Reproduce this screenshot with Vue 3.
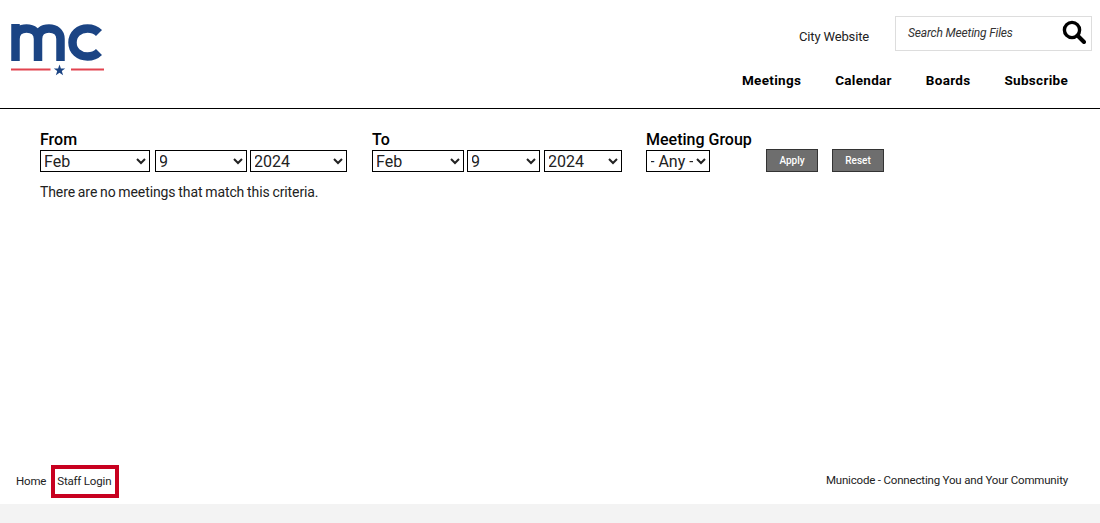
<script setup>
const months = ['Feb']
const filters = [
  { label: 'From', cls: 'from', widths: ['w110', 'w92', 'w97'] },
  { label: 'To', cls: 'to', widths: ['w92b', 'w73', 'w78'] }
]
</script>

<template>
  <div class="page">
    <header class="header">
      <a class="logo" href="#" aria-label="mc">
        <svg width="94" height="64" viewBox="0 0 94 64">
          <g fill="none" stroke="#1b4484" stroke-width="8.5">
            <path d="M4.500 45V8M4.500 23C4.500 15 10 12.500 15.500 12.500C22 12.500 27 16 27 23V45M27 23C27 15 32 12.500 38 12.500C44.500 12.500 49.500 16 49.500 23V45" />
            <path d="M88 17C85 14 81 12.500 76.500 12.500C68 12.500 61.500 18 61.500 26.500C61.500 35 68 40.500 76.500 40.500C81 40.500 85 39 88 36" />
          </g>
          <path d="M0 53.500H39.500M60 53.500H93" stroke="#e2434f" stroke-width="2" />
          <path d="M48.500 48.500l1.400 4h4.300l-3.400 2.600 1.300 4.100-3.600-2.500-3.600 2.500 1.300-4.100-3.400-2.600h4.300z" fill="#1b4484" />
        </svg>
      </a>
      <div class="header-right">
        <div class="top-row">
          <a class="city" href="#">City Website</a>
          <div class="search">
            <span class="placeholder">Search Meeting Files</span>
            <svg class="search-icon" width="24" height="24" viewBox="0 0 24 24">
              <circle cx="10" cy="10" r="7.600" fill="none" stroke="#000" stroke-width="3.400" />
              <path d="M15.500 15.500L22 22" stroke="#000" stroke-width="4" stroke-linecap="round" />
            </svg>
          </div>
        </div>
        <nav class="nav">
          <a href="#">Meetings</a>
          <a href="#">Calendar</a>
          <a href="#">Boards</a>
          <a href="#">Subscribe</a>
        </nav>
      </div>
    </header>

    <main class="main">
      <form class="filters" @submit.prevent>
        <div v-for="f in filters" :key="f.label" class="group" :class="f.cls">
          <label>{{ f.label }}</label>
          <div class="selects">
            <select :class="f.widths[0]"><option v-for="m in months" :key="m">{{ m }}</option></select>
            <select :class="f.widths[1]"><option>9</option></select>
            <select :class="f.widths[2]"><option>2024</option></select>
          </div>
        </div>
        <div class="group mg">
          <label>Meeting Group</label>
          <div class="selects">
            <select class="w64"><option>- Any -</option></select>
          </div>
        </div>
        <div class="buttons">
          <button type="button">Apply</button>
          <button type="button">Reset</button>
        </div>
      </form>
      <p class="empty">There are no meetings that match this criteria.</p>
    </main>

    <footer class="footer">
      <div class="links">
        <a href="#">Home</a>
        <a class="staff" href="#">Staff Login</a>
      </div>
      <span class="tagline">Municode - Connecting You and Your Community</span>
    </footer>
    <div class="bottom"></div>
  </div>
</template>

<style>
html, body { margin: 0; background: #fff; }
</style>

<style scoped>
.page {
  height: 523px;
  display: flex;
  flex-direction: column;
  font-family: Roboto, "Liberation Sans", sans-serif;
  color: #111;
  overflow: hidden;
}
a { color: inherit; text-decoration: none; }
.header {
  height: 108px;
  flex: none;
  box-sizing: content-box;
  border-bottom: 1px solid #000;
  display: flex;
  justify-content: space-between;
}
.logo { display: block; margin: 16px 0 0 11px; height: 64px; }
.header-right {
  display: flex;
  flex-direction: column;
  align-items: flex-end;
  padding: 16px 8px 0 0;
}
.top-row { display: flex; align-items: center; }
.city { font-size: 13px; letter-spacing: -0.15px; margin: 6px 26px 0 0; color: #222; }
.search {
  width: 197px;
  height: 35px;
  box-sizing: border-box;
  border: 1px solid #ddd;
  display: flex;
  align-items: center;
  justify-content: space-between;
  padding: 0 5px 0 12px;
}
.placeholder { font-size: 12px; letter-spacing: -0.17px; font-style: italic; color: #333; margin-top: -2px; }
.search-icon { display: block; margin-top: -3px; }
.nav {
  display: flex;
  gap: 34px;
  margin-top: 20px;
  padding-right: 24px;
  font-size: 13.5px;
  font-weight: 700;
  letter-spacing: 0.3px;
  line-height: 18px;
  color: #000;
}
.main { flex: 1; padding: 21px 0 0 40px; }
.filters { display: flex; align-items: flex-start; }
.group { display: flex; flex-direction: column; }
.group label {
  font-size: 16px;
  font-weight: 500;
  line-height: 20px;
  color: #000;
}
.from { width: 332px; }
.to { width: 274px; }
.mg { width: 120px; }
.selects { display: flex; }
select {
  height: 22px;
  box-sizing: border-box;
  font-family: Roboto, sans-serif;
  font-size: 16px;
  color: #222;
  background: #fff;
  border: 1px solid #000;
  border-radius: 0;
  padding: 0;
  margin: 0;
  text-indent: -1px;
}
.w110 { width: 110px; margin-right: 5px; }
.w92 { width: 92px; margin-right: 3px; }
.w97 { width: 97px; }
.w92b { width: 92px; margin-right: 3px; }
.w73 { width: 73px; margin-right: 4px; }
.w78 { width: 78px; }
.w64 { width: 64px; }
.buttons { display: flex; gap: 14px; margin-top: 19px; }
button {
  width: 52px;
  height: 23px;
  box-sizing: border-box;
  background: #6e6e6e;
  color: #fff;
  border: 1px solid #333;
  border-radius: 0;
  font-family: Roboto, sans-serif;
  font-size: 10px;
  font-weight: 500;
  padding: 0;
}
.empty {
  margin: 11px 0 0;
  font-size: 14px;
  line-height: 18px;
  letter-spacing: -0.1px;
  word-spacing: -0.55px;
  color: #222;
}
.footer {
  height: 39px;
  flex: none;
  display: flex;
  justify-content: space-between;
  padding: 0 32px 0 16px;
  font-size: 11.5px;
  letter-spacing: -0.18px;
  color: #222;
}
.links { display: flex; align-items: flex-start; }
.links a { line-height: 14px; margin-top: 9px; white-space: nowrap; }
.links .staff {
  margin: 0 0 0 5px;
  box-sizing: border-box;
  width: 68px;
  height: 33px;
  border: 4px solid #c8001f;
  padding: 5px 0 0 2px;
}
.tagline { margin-top: 8px; line-height: 14px; }
.bottom { height: 19px; flex: none; background: #f3f3f3; }
</style>
